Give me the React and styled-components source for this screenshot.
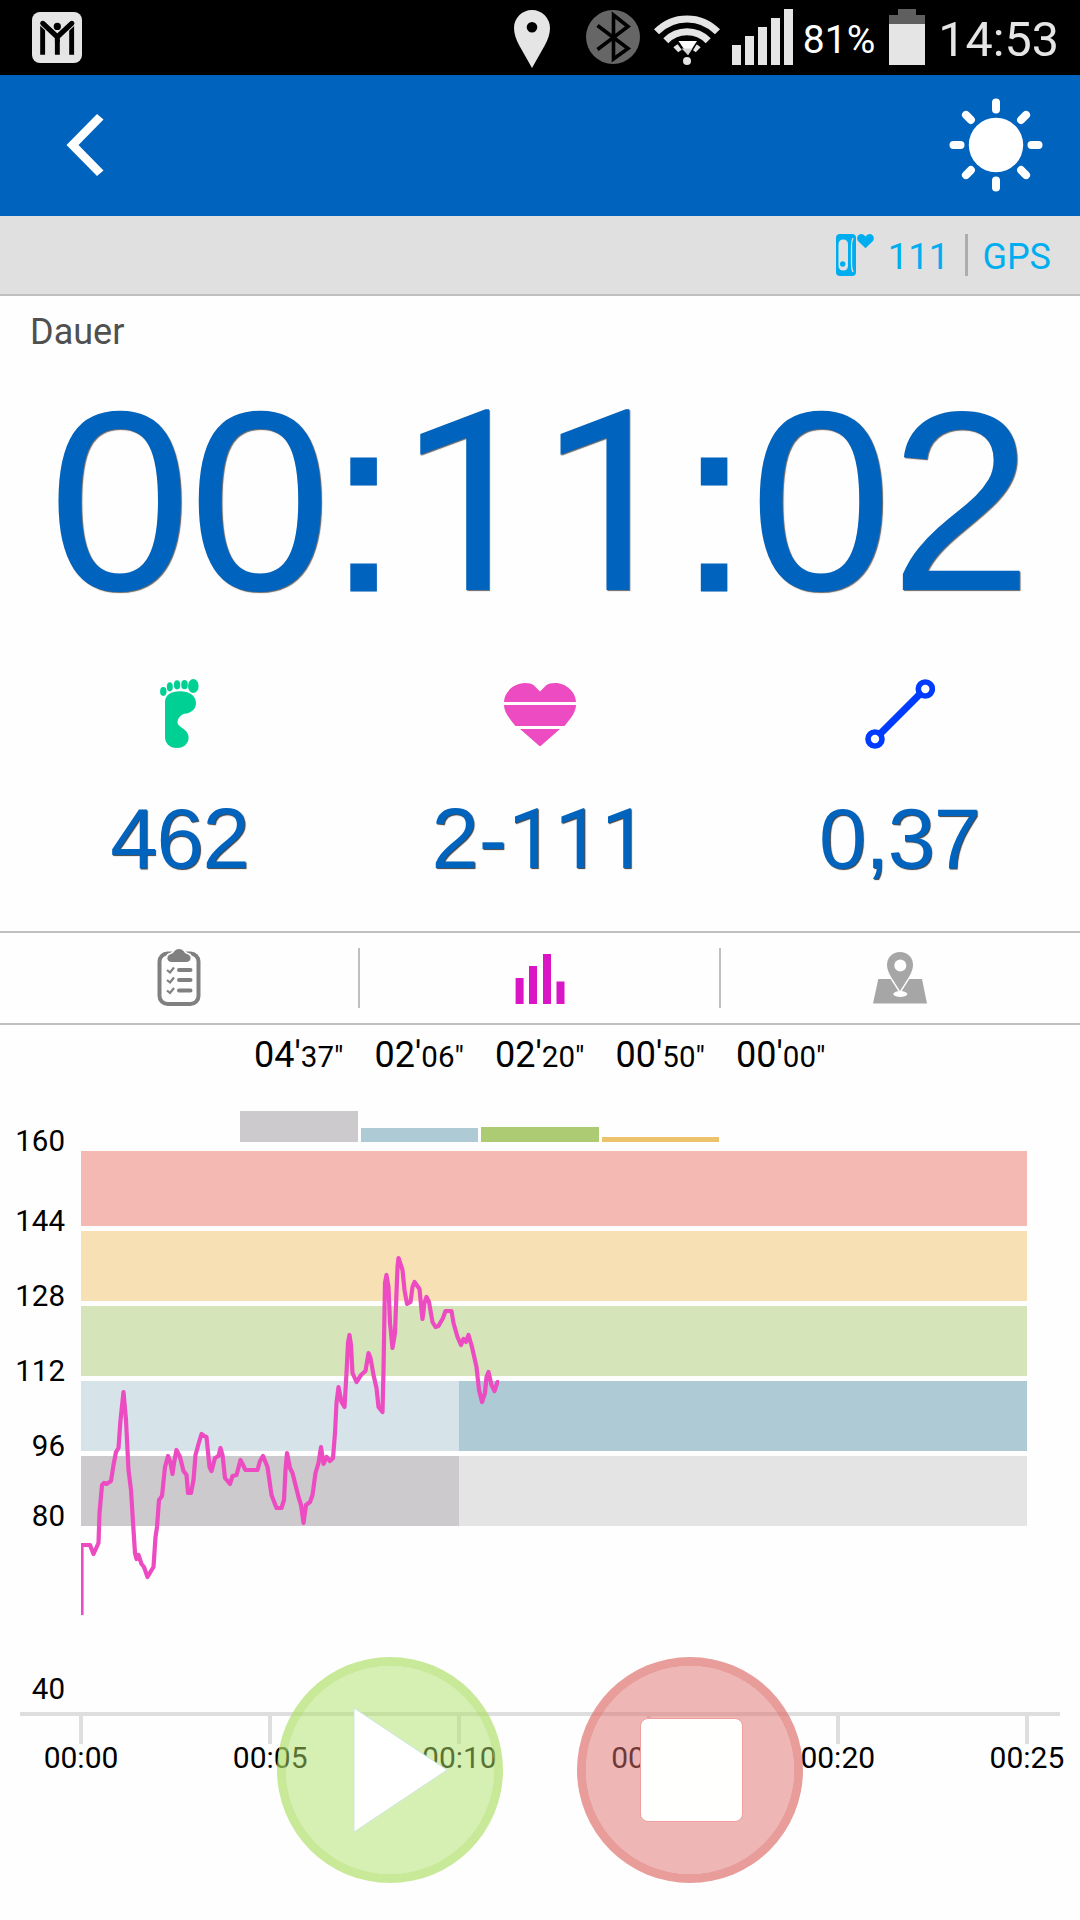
import React from 'react';
import styled, { createGlobalStyle } from 'styled-components';

const GlobalStyle = createGlobalStyle`
    body {
        margin: 0;
        background: #fefefe;
        font-family: Roboto, "Liberation Sans", sans-serif;
    }
    svg {
        display: block;
        flex-shrink: 0;
    }
`;

const Screen = styled.div`
    position: relative;
    width: 1080px;
    height: 1920px;
    overflow: hidden;
    background: #fefefe;
`;

const StatusBar = styled.div`
    display: flex;
    align-items: flex-start;
    box-sizing: border-box;
    height: 75px;
    padding: 0 21px 0 32px;
    background: #000;
`;

const StatusItem = styled.div`
    margin-left: ${(props) => props.$left};
    margin-top: ${(props) => props.$top}px;
`;

const StatusText = styled.span`
    margin-left: ${(props) => props.$left}px;
    color: ${(props) => props.$color};
    font-size: ${(props) => props.$size}px;
    line-height: ${(props) => props.$line}px;
    white-space: nowrap;
`;

const Header = styled.header`
    display: flex;
    align-items: center;
    justify-content: space-between;
    box-sizing: border-box;
    height: 141px;
    padding: 0 36px 2px 66px;
    background: #0063be;
`;

const IconButton = styled.button`
    padding: 0;
    border: none;
    background: none;
`;

const SensorBar = styled.div`
    display: flex;
    align-items: center;
    justify-content: flex-end;
    box-sizing: border-box;
    height: 80px;
    padding-right: 29px;
    border-bottom: 2px solid #bfbfbf;
    background: #e0e0e0;
    color: #00aeef;
    font-size: 36.5px;
`;

const SensorValue = styled.span`
    margin: 3px 16px 0 14px;
`;

const SensorLine = styled.div`
    width: 3px;
    height: 42px;
    background: #adadad;
`;

const SensorLabel = styled.span`
    margin: 3px 0 0 14px;
    font-size: 36px;
`;

const DurationLabel = styled.div`
    height: 71px;
    padding: 1px 0 0 30px;
    line-height: 71px;
    font-size: 36px;
    color: #505050;
`;

const Duration = styled.div`
    height: 200px;
    margin-top: 33px;
    padding-right: 1px;
    line-height: 200px;
    font-family: "Liberation Sans", Arial, sans-serif;
    font-size: 256px;
    letter-spacing: -2.1px;
    text-align: center;
    white-space: nowrap;
    color: #0063be;
    text-shadow: 1px 1px 1px rgba(0, 0, 0, 0.6);
`;

// Roboto has a one without a foot
const One = styled.span`
    font-family: Roboto, sans-serif;
    font-size: 0.985em;
    line-height: 0;
    letter-spacing: -0.006em;
`;

const Colon = styled.span`
    font-size: 0.965em;
    line-height: 0;
    letter-spacing: 1.5px;
    -webkit-text-stroke: 3px #0063be;
`;

const Hyphen = styled.span`
    margin: 0 2px 0 1px;
`;

const Stats = styled.div`
    display: grid;
    grid-template-columns: repeat(3, 1fr);
    box-sizing: border-box;
    height: 332px;
    padding-top: 77px;
    border-bottom: 2px solid #bfbfbf;
`;

const Stat = styled.div`
    display: flex;
    flex-direction: column;
    align-items: center;
`;

const StatIcon = styled.div`
    display: flex;
    align-items: center;
    justify-content: center;
    height: 72px;
    margin-bottom: 49px;
`;

const StatValue = styled.div`
    height: 80px;
    padding-right: 1px;
    line-height: 80px;
    font-family: "Liberation Sans", Arial, sans-serif;
    font-size: 85px;
    letter-spacing: -1.1px;
    color: #0063be;
    text-shadow: 1px 1px 1px rgba(0, 0, 0, 0.75);
`;

const Tabs = styled.nav`
    display: grid;
    grid-template-columns: 358px 2px 359px 2px 358px;
    align-items: center;
    height: 90px;
    border-bottom: 2px solid #bfbfbf;
`;

const Tab = styled.div`
    display: flex;
    justify-content: center;
    padding-top: ${(props) => props.$top || 0}px;
`;

const TabLine = styled.div`
    height: 60px;
    background: #bfbfbf;
`;

const ChartBody = styled.div`
    display: grid;
    grid-template-columns: 81px 946px;
    height: 687px;
`;

const ScaleLabels = styled.div`
    padding: 101px 16px 0 0;
    text-align: right;
    font-size: 29.5px;
    line-height: 30px;
`;

const ScaleLabel = styled.div`
    height: ${(props) => props.$height}px;
`;

const Zones = styled.div`
    display: grid;
    grid-template-columns: repeat(5, 120.5px);
    box-sizing: border-box;
    height: 126px;
    padding: 8px 0 9px 157.5px;
`;

const Zone = styled.div`
    display: flex;
    flex-direction: column;
    align-items: center;
    justify-content: space-between;
`;

const ZoneTime = styled.div`
    font-size: 36px;
    line-height: 44px;
    white-space: nowrap;
`;

const ZoneSeconds = styled.span`
    font-size: 29.5px;
`;

const ZoneBar = styled.div`
    width: 117.5px;
    background: ${(props) => props.$color};
`;

const Plot = styled.div`
    position: relative;
    display: flex;
    flex-direction: column;
    gap: 5px;
`;

const Band = styled.div`
    display: flex;
    height: ${(props) => props.$height || 70}px;
    background: ${(props) => props.$color};
`;

const BandDone = styled.div`
    width: 378px;
    background: ${(props) => props.$color};
`;

const Curve = styled.svg`
    position: absolute;
    top: 0;
    left: 0;
`;

const AxisLine = styled.div`
    height: 4px;
    margin: 0 20px;
    background: #dedede;
`;

const Ticks = styled.div`
    display: grid;
    grid-template-columns: repeat(6, 189.2px);
    width: 1135.2px;
    margin-left: -13.6px;
`;

const Tick = styled.div`
    display: flex;
    flex-direction: column;
    align-items: center;
    font-size: 30px;
    line-height: 30px;

    &::before {
        content: '';
        width: 4px;
        height: 28px;
        margin-bottom: -1px;
        background: #dedede;
    }
`;

const Controls = styled.div`
    position: absolute;
    top: 1657px;
    left: 277px;
    display: flex;
    gap: 74px;
`;

const RoundButton = styled.button`
    display: flex;
    align-items: center;
    justify-content: center;
    box-sizing: border-box;
    width: 226px;
    height: 226px;
    padding: 0 0 0 ${(props) => props.$shift}px;
    border: 9px solid rgba(${(props) => props.$rgb}, 0.68);
    border-radius: 50%;
    background: rgba(${(props) => props.$rgb}, 0.505);
    background-clip: padding-box;
`;

const StopSquare = styled.div`
    box-sizing: border-box;
    width: 103px;
    height: 104px;
    border: 1px solid #ef9f9f;
    border-radius: 8px;
    background: #fffffd;
`;

const scale = [
    { value: 160, height: 80 },
    { value: 144, height: 75 },
    { value: 128, height: 75 },
    { value: 112, height: 75 },
    { value: 96, height: 70 },
    { value: 80, height: 173 },
    { value: 40, height: 30 },
];

const zones = [
    { min: '04', sec: '37', color: '#cdcacd', bar: 31 },
    { min: '02', sec: '06', color: '#adcad5', bar: 14 },
    { min: '02', sec: '20', color: '#adcb72', bar: 15 },
    { min: '00', sec: '50', color: '#edc26c', bar: 5 },
    { min: '00', sec: '00', color: '#f3b9b2', bar: 0 },
];

const times = ['00:00', '00:05', '00:10', '00:15', '00:20', '00:25'];

const heartRate =
    '0.5,464 0.5,394 9,394 12.5,403 17.5,392 18.5,362 21,334 23,332 25.5,333 30,330 32.5,314 35,301 ' +
    '37.5,297 39.5,269 42.5,241 45,269 47.5,319 50,339 52.5,379 54,402 55.5,408 57.5,404 60.5,413 ' +
    '63,416 66.5,426 70,420 72.5,416 74.5,386 76,376 78,349 81,345 84,316 87,305 89.5,312 91.5,323 ' +
    '93,312 95.5,299 99,306 102.5,320 105.5,324 107,342 110,342 112.5,329 114.5,304 117.5,293 ' +
    '120.5,283 123,285 125.5,286 128.5,316 130.5,320 134,307 137.5,305 139.5,297 141.5,304 144,327 ' +
    '149,333 151.5,325 155.5,324 159.5,309 164.5,319 176.5,319 179,310 182,305 186.5,316 190.5,344 ' +
    '195.5,357 200.5,357 203,349 204.5,319 206,302 209,317 211.5,322 215,336 217.5,346 220,354 ' +
    '222.5,372 225,354 229,351 231.5,344 234.5,322 237.5,312 240,296 242.5,313 245.5,306 249,310 ' +
    '252,307 254,282 255.5,252 257.5,236 260.5,251 263.5,256 265.5,222 267,192 268.5,184 270,194 ' +
    '271.5,222 275.5,231 280,224 284.5,220 287.5,202 289.5,207 292.5,224 295.5,237 297.5,256 ' +
    '301.5,261 302.5,219 304,132 305.5,124 307.5,136 309,172 311.5,197 314,182 315.5,142 316.5,116 ' +
    '317.5,107 321.5,119 323.5,139 326,153 329.5,151 331.5,136 333.5,131 338.5,138 340.5,159 ' +
    '341.5,168 343.5,152 345.5,146 348,151 351.5,171 354.5,176 357.5,175 362,167 364.5,160 370.5,160 ' +
    '372.5,172 376.5,186 380,194 382.5,188 385,191 387.5,184 391,196 395.5,216 398,239 401,251 ' +
    '404,242 405.5,226 407.5,221 410.5,234 413.5,240 416.5,231 418,231';

const LogoIcon = () => (
    <svg width="50" height="51" viewBox="0 0 50 51">
        <rect width="50" height="51" rx="8" fill="#e5e5e5" />
        <path d="M8.2 13h4.9v29.7H8.2zM22.9 22h4.9v20.7h-4.9zM37.2 13h4.9v29.7h-4.9z" />
        <path d="M10.8 11.4 25.3 25 39.8 11.4" fill="none" stroke="#e5e5e5" strokeWidth="7" strokeLinecap="round" />
        <path d="M10.8 11.4 25.3 25 39.8 11.4" fill="none" stroke="#000" strokeWidth="5.2" strokeLinecap="round" />
        <path d="M22.9 24h4.9v6h-4.9z" />
        <circle cx="25.3" cy="14.4" r="3.6" />
    </svg>
);

const PinIcon = () => (
    <svg width="36" height="58" viewBox="0 0 36 58">
        <path
            d="M18 0C8 0 0 8 0 18c0 6 2 11 5 17l13 23 13-23c3-6 5-11 5-17C36 8 28 0 18 0zm0 12a5.3 5.3 0 1 1 0 10.6 5.3 5.3 0 0 1 0-10.6z"
            fill="#e5e5e5"
        />
    </svg>
);

const BluetoothIcon = () => (
    <svg width="54" height="54" viewBox="0 0 54 54">
        <circle cx="27" cy="27" r="27" fill="#666" />
        <path d="M11.500 15.500 42 38.500 27.500 49V5L42 16.500 11.500 39.500" fill="none" stroke="#000" strokeWidth="3.6" />
    </svg>
);

const WifiIcon = () => (
    <svg width="66" height="50" viewBox="0 0 66 50">
        <g fill="none" stroke="#e5e5e5" strokeWidth="7">
            <path d="M2.500 16.800a42.500 42.500 0 0 1 61 0" />
            <path d="M11.800 25.800a29.500 29.500 0 0 1 42.400 0" />
            <path d="M21.800 34.800a16 16 0 0 1 22.400 0" />
        </g>
        <path d="M21 25.500h24L34 43.500z" fill="#000" />
        <path d="M24.500 26h18.500l-9 14z" fill="#fff" />
        <path d="M27.500 33.500h11l-4.500 6.500z" fill="#d5d5d5" />
        <circle cx="33" cy="46" r="4" fill="#e5e5e5" />
    </svg>
);

const SignalIcon = () => (
    <svg width="61" height="56" viewBox="0 0 61 56">
        <path d="M0 36h9v20H0zM13 27h9v29h-9zM26 18h9v38h-9zM39 9h9v47h-9zM52 0h9v56h-9z" fill="#e5e5e5" />
    </svg>
);

const BatteryIcon = () => (
    <svg width="36" height="56" viewBox="0 0 36 56">
        <path d="M9 0h18v6h9v9H0V6h9z" fill="#5f5f5f" />
        <path d="M0 15h36v41H0z" fill="#e5e5e5" />
    </svg>
);

const BackIcon = () => (
    <svg width="38" height="62" viewBox="0 0 38 62">
        <path d="M31 0 .5 31 31 62l6.500-5.500L12.500 31l25-25.500z" fill="#fff" />
    </svg>
);

const SunIcon = () => (
    <svg width="96" height="96" viewBox="-48 -48 96 96">
        <circle r="27.2" fill="#fff" />
        {[0, 45, 90, 135, 180, 225, 270, 315].map((angle) => (
            <line
                key={angle}
                x1="35.5"
                x2="42.5"
                y1="0"
                y2="0"
                stroke="#fff"
                strokeWidth="8"
                strokeLinecap="round"
                transform={`rotate(${angle})`}
            />
        ))}
    </svg>
);

const BandIcon = () => (
    <svg width="38" height="42" viewBox="0 0 38 42">
        <rect width="20" height="42" rx="4" fill="#00aeef" />
        <rect x="2.5" y="5.5" width="9.5" height="31" rx="4.5" fill="#e0e0e0" />
        <circle cx="6.7" cy="30" r="2.7" fill="#00aeef" />
        <path d="M17 4q-1.500 3-1.500 8v18q0 5 1.500 8" fill="none" stroke="#e0e0e0" strokeWidth="1.3" />
        <path d="M29.500 14.300 22.500 7.500C19.500 4 22 0 25.500 0q2.500 0 4 2.500Q31 0 33.500 0c3.500 0 6 4 3 7.500z" fill="#00aeef" />
    </svg>
);

const FootIcon = () => (
    <svg width="40" height="70" viewBox="0 0 40 70" fill="#00d094">
        <ellipse cx="3.3" cy="12.5" rx="3.2" ry="4.4" />
        <ellipse cx="9.8" cy="7.8" rx="3" ry="4.6" />
        <ellipse cx="17.1" cy="5.8" rx="3.2" ry="4.6" />
        <ellipse cx="24.5" cy="5.7" rx="3.3" ry="4.6" />
        <ellipse cx="33.3" cy="7" rx="5.3" ry="7" />
        <path d="M5 23C5 16 11 12.200 20 12.200c9 0 16 4.300 16 11.800 0 6-5 10.500-11.500 10.700C20 36 17.500 40 17.500 43c0 3 2.500 4.200 5.500 6.500 3.500 2.500 5.600 5 5.600 9.500C28.600 64 24 69 17 69 9 69 5 64 5 58z" />
    </svg>
);

const HeartIcon = () => (
    <svg width="72" height="63" viewBox="0 0 72 63" fill="#ec4bc2">
        <path d="M36 8.500 29.500 2Q27 0 21 0C9 0 0 10 0 19h72C72 10 63 0 51 0q-6 0-8.500 2z" />
        <path d="M0 22h72c0 7-5 13-11.500 21h-49C5 35 0 29 0 22z" />
        <path d="M16 46h40L36 63.500z" />
    </svg>
);

const DistanceIcon = () => (
    <svg width="70" height="70" viewBox="0 0 70 70" fill="none" stroke="#003cff">
        <path d="M14 56 56 14" strokeWidth="7" />
        <circle cx="60.3" cy="10" r="7" strokeWidth="5.6" />
        <circle cx="10" cy="60" r="7" strokeWidth="5.6" />
    </svg>
);

const ClipboardIcon = () => (
    <svg width="44" height="58" viewBox="0 0 44 58">
        <rect x="2.5" y="4.5" width="39" height="50.5" rx="8" fill="none" stroke="#808080" strokeWidth="4" />
        <path
            d="M15 13c-6 0-6-7-1-8 2-.5 2-1 3.500-3Q19 0 22 0t4.500 2c1.500 2 1.500 2.500 3.500 3 5 1 5 8-1 8z"
            fill="#808080"
            stroke="#fefefe"
            strokeWidth="3"
            paintOrder="stroke"
        />
        <path d="M22 21h11.500M22 31h11.500M22 41.500h11.500" stroke="#808080" strokeWidth="4" strokeLinecap="round" />
        <path
            d="m10 21 3 2.500 4-5M10 31l3 2.500 4-5M10 41.500l3 2.500 4-5"
            fill="none"
            stroke="#808080"
            strokeWidth="2.2"
        />
    </svg>
);

const BarsIcon = () => (
    <svg width="50" height="50" viewBox="0 0 50 50">
        <path d="M.6 24h8v26h-8zM14 12h8v38h-8zM28 0h8v50h-8zM41.500 27.500h8V50h-8z" fill="#d915c6" />
    </svg>
);

const MapIcon = () => (
    <svg width="54" height="52" viewBox="0 0 54 52" fill="#a6a6a6">
        <path d="M5.300 27H49l5 24.600H0z" />
        <ellipse cx="27.3" cy="42" rx="7" ry="3" fill="#fefefe" />
        <path
            d="M27 0C19.500 0 14 5.500 14 13c0 4 1.500 7 3.500 11L27 39l9.500-15c2-4 3.500-7 3.500-11C40 5.500 34.500 0 27 0z"
            stroke="#fefefe"
            strokeWidth="3"
            paintOrder="stroke"
        />
        <circle cx="27.3" cy="13.5" r="6" fill="#fefefe" />
    </svg>
);

const PlayIcon = () => (
    <svg width="96" height="126" viewBox="0 0 96 126">
        <path d="M1 1v124l93-62z" fill="#fff" stroke="#cbe8df" strokeWidth="1" />
    </svg>
);

const Digits = ({ text }) =>
    text.split(/(1+|:|-)/).map((part, index) => {
        if (part === ':') return <Colon key={index}>{part}</Colon>;
        if (part === '-') return <Hyphen key={index}>{part}</Hyphen>;
        if (part.startsWith('1')) return <One key={index}>{part}</One>;
        return part;
    });

const App = () => {
    return (
        <>
            <GlobalStyle />
            <Screen>
                <StatusBar>
                    <StatusItem $left="0" $top={12}><LogoIcon /></StatusItem>
                    <StatusItem $left="auto" $top={10}><PinIcon /></StatusItem>
                    <StatusItem $left="36px" $top={10}><BluetoothIcon /></StatusItem>
                    <StatusItem $left="14px" $top={15}><WifiIcon /></StatusItem>
                    <StatusItem $left="12px" $top={9}><SignalIcon /></StatusItem>
                    <StatusText $left={10} $size={39} $line={80} $color="#fff">81%</StatusText>
                    <StatusItem $left="14px" $top={9}><BatteryIcon /></StatusItem>
                    <StatusText $left={13} $size={48.5} $line={79} $color="#e5e5e5">14:53</StatusText>
                </StatusBar>

                <Header>
                    <IconButton><BackIcon /></IconButton>
                    <IconButton><SunIcon /></IconButton>
                </Header>

                <SensorBar>
                    <BandIcon />
                    <SensorValue>111</SensorValue>
                    <SensorLine />
                    <SensorLabel>GPS</SensorLabel>
                </SensorBar>

                <DurationLabel>Dauer</DurationLabel>
                <Duration><Digits text="00:11:02" /></Duration>

                <Stats>
                    <Stat>
                        <StatIcon><FootIcon /></StatIcon>
                        <StatValue><Digits text="462" /></StatValue>
                    </Stat>
                    <Stat>
                        <StatIcon><HeartIcon /></StatIcon>
                        <StatValue><Digits text="2-111" /></StatValue>
                    </Stat>
                    <Stat>
                        <StatIcon><DistanceIcon /></StatIcon>
                        <StatValue><Digits text="0,37" /></StatValue>
                    </Stat>
                </Stats>

                <Tabs>
                    <Tab><ClipboardIcon /></Tab>
                    <TabLine />
                    <Tab $top={1}><BarsIcon /></Tab>
                    <TabLine />
                    <Tab><MapIcon /></Tab>
                </Tabs>

                <ChartBody>
                    <ScaleLabels>
                        {scale.map((item) => (
                            <ScaleLabel key={item.value} $height={item.height}>{item.value}</ScaleLabel>
                        ))}
                    </ScaleLabels>
                    <div>
                        <Zones>
                            {zones.map((zone, index) => (
                                <Zone key={index}>
                                    <ZoneTime>{zone.min}'<ZoneSeconds>{zone.sec}"</ZoneSeconds></ZoneTime>
                                    <ZoneBar $color={zone.color} style={{ height: zone.bar }} />
                                </Zone>
                            ))}
                        </Zones>
                        <Plot>
                            <Band $height={75} $color="#f3b9b2" />
                            <Band $color="#f8e0b5" />
                            <Band $color="#d5e4b9" />
                            <Band $color="#adcad5"><BandDone $color="#d6e4e9" /></Band>
                            <Band $color="#e4e4e4"><BandDone $color="#cdcacd" /></Band>
                            <Curve width="946" height="464" viewBox="0 0 946 464">
                                <polyline
                                    points={heartRate}
                                    fill="none"
                                    stroke="#ec4bc2"
                                    strokeWidth="4.2"
                                    strokeLinejoin="round"
                                />
                            </Curve>
                        </Plot>
                    </div>
                </ChartBody>

                <AxisLine />
                <Ticks>
                    {times.map((time) => (
                        <Tick key={time}>{time}</Tick>
                    ))}
                </Ticks>

                <Controls>
                    <RoundButton $rgb="174, 223, 103" $shift={22}><PlayIcon /></RoundButton>
                    <RoundButton $rgb="221, 110, 106" $shift={2}><StopSquare /></RoundButton>
                </Controls>
            </Screen>
        </>
    );
};

export default App;
